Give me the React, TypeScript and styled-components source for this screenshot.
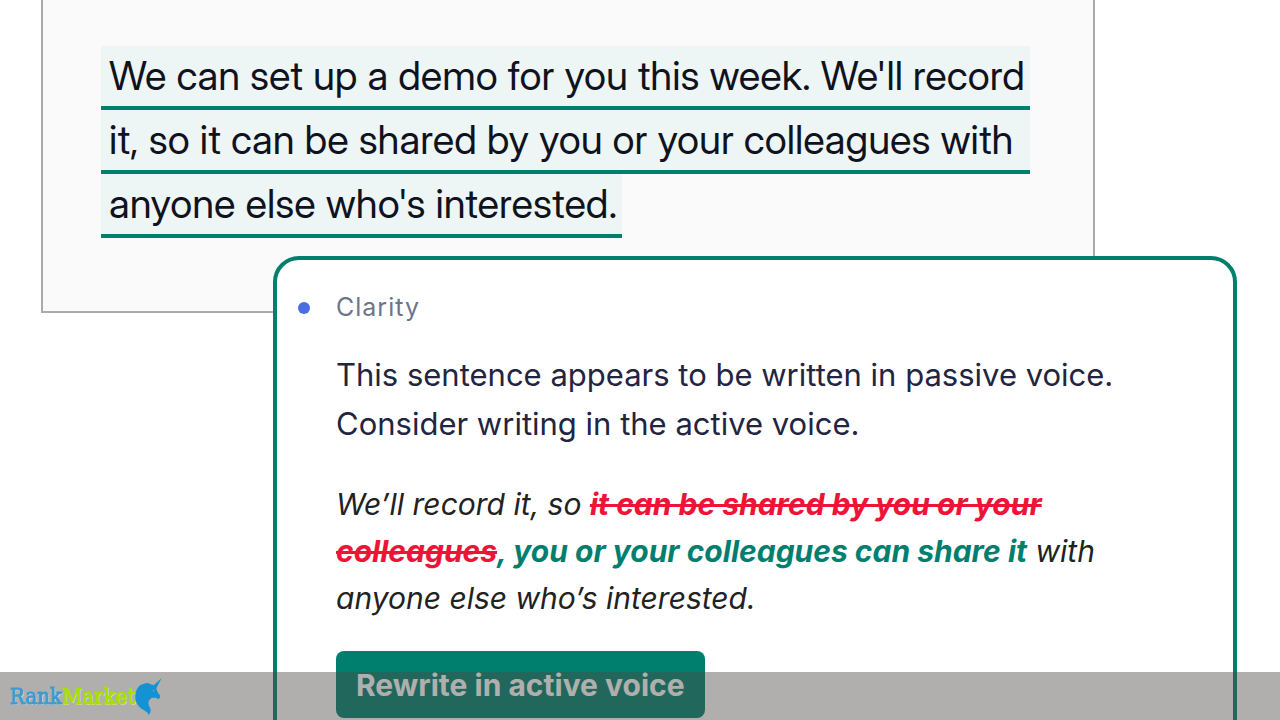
import React from "react";
import styled, { createGlobalStyle } from "styled-components";

const GlobalStyle = createGlobalStyle`
  *, *::before, *::after { box-sizing: border-box; }
  body { margin: 0; background: #ffffff; font-family: Inter, sans-serif; }
`;

const Page = styled.main`
  height: 100vh;
  overflow: hidden;
`;

const Editor = styled.section`
  margin: 0 185px 0 41px;
  padding: 46px 58px 73px;
  border: 2px solid #aaaaaa;
  border-top: 0;
  background: #fafafa;
`;

const Highlight = styled.p`
  display: grid;
  width: fit-content;
  margin: 0;
  color: #10121e;
  font-family: "Inter Display", Inter, sans-serif;
  font-size: 40px;
  line-height: 60px;
  white-space: nowrap;
`;

const HighlightLine = styled.span<{ $short?: boolean }>`
  justify-self: ${({ $short }) => ($short ? "start" : "stretch")};
  padding: 0 5px 0 8px;
  border-bottom: 4px solid #007f6e;
  background: #edf5f5;
`;

const Card = styled.section`
  position: relative;
  margin: -57px 43px 0 273px;
  padding: 27px 56px 96px 21px;
  display: grid;
  grid-template-columns: 38px 1fr;
  border: 4px solid #007f6e;
  border-radius: 26px;
  background: #ffffff;
`;

const Dot = styled.span`
  width: 12px;
  height: 12px;
  margin-top: 15px;
  border-radius: 50%;
  background: #4a6ee0;
`;

const Category = styled.h2`
  margin: 0;
  color: #6d758d;
  font-size: 25px;
  font-weight: 400;
  line-height: 40px;
  letter-spacing: 1px;
`;

const Advice = styled.p`
  margin: 23px 0 0;
  color: #23243f;
  font-size: 31px;
  line-height: 49px;
`;

const Suggestion = styled.p`
  margin: 33px 0 0;
  color: #222222;
  font-size: 30px;
  font-style: italic;
  line-height: 47px;
`;

const Removed = styled.del`
  color: #ee1438;
  font-weight: 700;
`;

const Added = styled.ins`
  color: #007f6e;
  font-weight: 700;
  text-decoration: none;
`;

const RewriteButton = styled.button`
  margin-top: 29px;
  padding: 0 20px;
  height: 67px;
  border: 0;
  border-radius: 8px;
  background: #007f6e;
  color: #ffffff;
  font-family: inherit;
  font-size: 30px;
  font-weight: 700;
`;

const Banner = styled.footer`
  position: fixed;
  inset: auto 0 0;
  display: flex;
  align-items: center;
  height: 48px;
  padding-left: 10px;
  background: rgba(76, 73, 70, 0.44);
`;

const Brand = styled.span`
  padding-top: 2px;
  color: #3f9bd0;
  font-family: "DejaVu Serif Condensed", "DejaVu Serif", serif;
  font-size: 22px;
  line-height: 28px;
  -webkit-text-stroke: 1px currentColor;
  text-shadow: 1px 1px 0 #dcdcdc;
`;

const BrandAccent = styled.span`
  color: #a8e000;
`;

const Unicorn = () => (
  <svg width="27" height="39" viewBox="8 6 81 117" aria-hidden="true">
    <path
      fill="#1592d3"
      d="M88 9 72 40 76 52 84 62 82 70 77 72 70 68 60 68C53 70 49 76 48 84C48 93 55 98 55 106C55 112 52 116 50 121C47 113 42 110 34 105C20 97 9 84 9 66C9 44 19 28 36 26C42 22 50 24 55 28L64 31Z"
    />
    <circle cx="64" cy="47" r="2" fill="#aeacaa" />
  </svg>
);

export default function App() {
  return (
    <>
      <GlobalStyle />
      <Page>
        <Editor>
          <Highlight>
            <HighlightLine>We can set up a demo for you this week. We'll record</HighlightLine>
            <HighlightLine>it, so it can be shared by you or your colleagues with</HighlightLine>
            <HighlightLine $short>anyone else who's interested.</HighlightLine>
          </Highlight>
        </Editor>
        <Card>
          <Dot />
          <div>
            <Category>Clarity</Category>
            <Advice>
              This sentence appears to be written in passive voice.
              <br />
              Consider writing in the active voice.
            </Advice>
            <Suggestion>
              We’ll record it, so <Removed>it can be shared by you or your colleagues</Removed>
              <Added>, you or your colleagues can share it</Added> with anyone else who’s interested.
            </Suggestion>
            <RewriteButton type="button">Rewrite in active voice</RewriteButton>
          </div>
        </Card>
      </Page>
      <Banner>
        <Brand>
          Rank<BrandAccent>Market</BrandAccent>
        </Brand>
        <Unicorn />
      </Banner>
    </>
  );
}
